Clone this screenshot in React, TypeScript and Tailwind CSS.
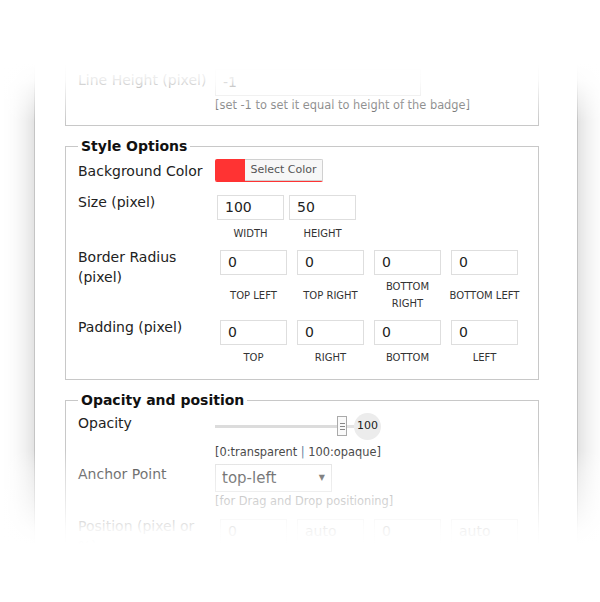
import { FC, ReactNode } from "react";

// 入力欄（数値）
const Box: FC<{ value: string; w?: string }> = ({ value, w = "w-[67px]" }) => (
  <div
    className={`${w} flex h-[25px] items-center border border-[#dedede] bg-white pl-[7px] text-[14px] text-[#222]`}
  >
    {value}
  </div>
);

// 小見出し（WIDTH など）
const Cap: FC<{ children: ReactNode }> = ({ children }) => (
  <div className="text-center text-[10px] leading-[17px] text-[#333]">{children}</div>
);

// 左側のラベル
const Label: FC<{ children: ReactNode; className?: string }> = ({ children, className = "" }) => (
  <div className={`w-[137px] shrink-0 text-[14px] leading-[20px] ${className}`}>{children}</div>
);

const radius = ["TOP LEFT", "TOP RIGHT", "BOTTOM RIGHT", "BOTTOM LEFT"];
const padding = ["TOP", "RIGHT", "BOTTOM", "LEFT"];

const App: FC = () => {
  return (
    <div className="relative h-[602px] w-[600px] overflow-hidden bg-white font-['DejaVu_Sans',Verdana,sans-serif] text-[#222]">
      <div className="ml-[34px] h-[602px] w-[544px] border-x border-[#c4c4c4] bg-white pt-[40px] shadow-[0_0_28px_rgba(0,0,0,0.22)]">
        {/* 上のフィールドセット（一部のみ） */}
        <fieldset className="ml-[30px] w-[474px] border border-[#c8c8c8] px-[12px] pt-[28px] pb-[11px]">
          <div className="flex items-center">
            <Label className="mt-[-6px]">Line Height (pixel)</Label>
            <div className="flex h-[27px] w-[206px] items-center border border-[#dedede] pl-[7px] text-[14px]">-1</div>
          </div>
          <div className="ml-[137px] text-[11.4px] leading-[18px] text-[#555]">
            [set -1 to set it equal to height of the badge]
          </div>
        </fieldset>

        {/* Style Options */}
        <fieldset className="mt-[10px] ml-[30px] w-[474px] border border-[#c8c8c8] px-[12px] pb-[13px]">
          <legend className="px-[3px] text-[14px] leading-[20px] font-bold text-[#111]">Style Options</legend>
          <div className="mt-[3px] flex h-[23px] items-center">
            <Label>Background Color</Label>
            <div className="flex h-[23px] overflow-hidden rounded-[2px] border-b border-[#f33]">
              <div className="w-[30px] bg-[#ff3333]" />
              <div className="flex w-[78px] items-center justify-center border border-l-0 border-[#d0d0d0] bg-[#f7f7f7] text-[11px] text-[#555]">
                Select Color
              </div>
            </div>
          </div>

          <div className="mt-[13px] flex items-start">
            <Label className="mt-[-3px]">Size (pixel)</Label>
            <div className="ml-[2px] flex gap-[5px]">
              <div>
                <Box value="100" />
                <div className="mt-[5px]"><Cap>WIDTH</Cap></div>
              </div>
              <div>
                <Box value="50" />
                <div className="mt-[5px]"><Cap>HEIGHT</Cap></div>
              </div>
            </div>
          </div>

          <div className="mt-[8px] flex items-start">
            <Label className="mt-[-3px]">Border Radius (pixel)</Label>
            <div className="ml-[5px] flex gap-[10px]">
              {radius.map((r) => (
                <div key={r} className="w-[67px]">
                  <Box value="0" />
                  <div className="mt-[3px] flex h-[34px] items-center justify-center">
                    <Cap>{r === "BOTTOM RIGHT" ? <>BOTTOM<br />RIGHT</> : <span className="whitespace-nowrap">{r}</span>}</Cap>
                  </div>
                </div>
              ))}
            </div>
          </div>

          <div className="mt-[8px] flex items-start">
            <Label className="mt-[-3px]">Padding (pixel)</Label>
            <div className="ml-[5px] flex gap-[10px]">
              {padding.map((p) => (
                <div key={p} className="w-[67px]">
                  <Box value="0" />
                  <div className="mt-[4px]"><Cap>{p}</Cap></div>
                </div>
              ))}
            </div>
          </div>
        </fieldset>

        {/* Opacity and position */}
        <fieldset className="mt-[10px] ml-[30px] w-[474px] border border-[#c8c8c8] px-[12px] pb-[20px]">
          <legend className="px-[3px] text-[14px] leading-[20px] font-bold text-[#111]">Opacity and position</legend>
          <div className="mt-[3px] flex items-start">
            <Label>Opacity</Label>
            <div className="flex h-[26px] items-center">
              <div className="h-[3px] w-[122px] bg-[#dcdcdc]" />
              <div className="flex h-[20px] w-[10px] flex-col items-center justify-center gap-[2px] border border-[#aaa] bg-[#fafafa]">
                <div className="h-px w-[5px] bg-[#888]" />
                <div className="h-px w-[5px] bg-[#888]" />
                <div className="h-px w-[5px] bg-[#888]" />
              </div>
              <div className="h-[3px] w-[7px] bg-[#e4e4e4]" />
              <div className="flex h-[27px] w-[27px] items-center justify-center rounded-full bg-[#ececec] text-[11px] text-[#222]">
                100
              </div>
            </div>
          </div>
          <div className="mt-[4px] ml-[137px] text-[11.4px] leading-[18px] text-[#444]">
            [0:transparent <span className="text-[#5b7a99]">|</span> 100:opaque]
          </div>
          <div className="mt-[3px] flex items-start">
            <Label>Anchor Point</Label>
            <div className="flex h-[28px] w-[117px] items-center justify-between border border-[#dedede] pr-[6px] pl-[6px] text-[15px]">
              <span>top-left</span>
              <span className="text-[8px] text-[#333]">▼</span>
            </div>
          </div>
          <div className="ml-[137px] text-[11.4px] leading-[18px] text-[#888]">[for Drag and Drop positioning]</div>
          <div className="mt-[9px] flex items-start">
            <Label className="mt-[-3px]">Position (pixel or %)</Label>
            <div className="ml-[5px] flex gap-[10px]">
              {["0", "auto", "0", "auto"].map((v, i) => (
                <Box key={i} value={v} />
              ))}
            </div>
          </div>
        </fieldset>
      </div>

      {/* 上下のフェード */}
      <div className="absolute top-0 right-0 left-0 h-[125px] bg-[linear-gradient(to_bottom,#fff_0px,#fff_64px,rgba(255,255,255,0.9)_80px,rgba(255,255,255,0)_122px)]" />
      <div className="absolute right-0 bottom-0 left-0 h-[152px] bg-[linear-gradient(to_bottom,rgba(255,255,255,0)_0px,rgba(255,255,255,0.35)_22px,rgba(255,255,255,0.6)_50px,rgba(255,255,255,0.94)_80px,#fff_94px)]" />
    </div>
  );
};
export default App;
